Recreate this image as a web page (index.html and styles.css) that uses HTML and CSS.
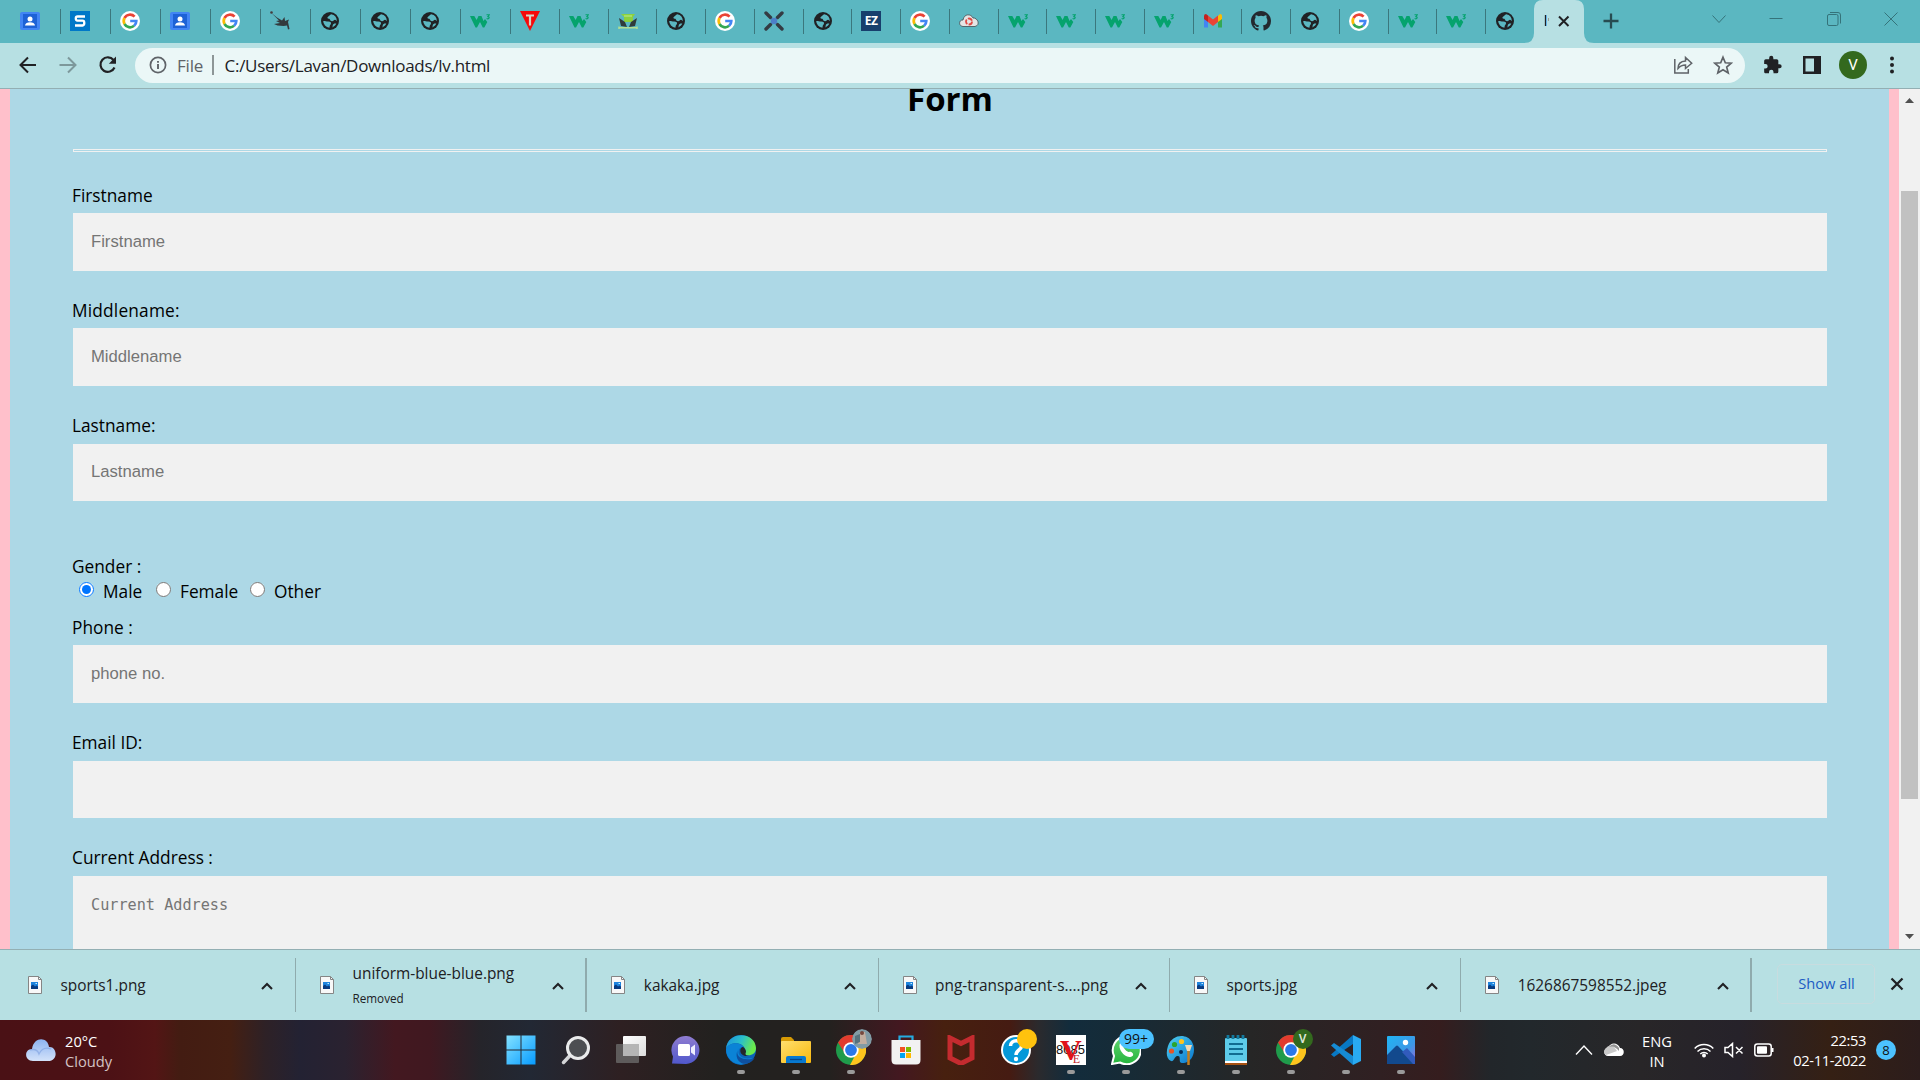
FILE: index.html
```html
<!DOCTYPE html>
<html lang="en">
<head>
<meta charset="utf-8">
<title>Form</title>
<link rel="stylesheet" href="styles.css">
</head>
<body>
<svg class="defs" aria-hidden="true">
  <defs>
    <linearGradient id="g-edge" x1="0" y1="0" x2="1" y2="0.3"><stop offset="0" stop-color="#1a8fe0"/><stop offset=".55" stop-color="#2bc0c8"/><stop offset="1" stop-color="#6bea4c"/></linearGradient>
    <linearGradient id="g-chat" x1="0" y1="0" x2="0" y2="1"><stop offset="0" stop-color="#8f7cd0"/><stop offset="1" stop-color="#5058cc"/></linearGradient>
    <linearGradient id="g-win" x1="0" y1="0" x2="1" y2="1"><stop offset="0" stop-color="#84e2ff"/><stop offset="1" stop-color="#069bff"/></linearGradient>
    <linearGradient id="g-fold" x1="0" y1="0" x2="1" y2="1"><stop offset="0" stop-color="#ffdf6e"/><stop offset="1" stop-color="#f9b90d"/></linearGradient>
    <linearGradient id="g-cloud" x1="0" y1="0" x2="0" y2="1"><stop offset="0" stop-color="#8db3f0"/><stop offset="1" stop-color="#d3e2fa"/></linearGradient>
    <linearGradient id="g-paint" x1="0" y1="0" x2="1" y2="1"><stop offset="0" stop-color="#4fd0f0"/><stop offset="1" stop-color="#0a78cf"/></linearGradient>
    <linearGradient id="g-photo" x1="0" y1="0" x2="1" y2="1"><stop offset="0" stop-color="#20b4f4"/><stop offset=".6" stop-color="#3c98e6"/><stop offset="1" stop-color="#9a68d8"/></linearGradient>
    <linearGradient id="g-wa" x1="0" y1="0" x2="0" y2="1"><stop offset="0" stop-color="#62d571"/><stop offset="1" stop-color="#25b43c"/></linearGradient>
    <linearGradient id="g-view" x1="0" y1="0" x2="1" y2="1"><stop offset="0" stop-color="#fff"/><stop offset="1" stop-color="#dcdcdc"/></linearGradient>
  </defs>
  <symbol id="contact" viewBox="0 0 20 20"><rect y="1" width="20" height="18" rx="2" fill="#4285f4"/><rect x="3" y="3" width="14" height="14" fill="#1e62d6"/><circle cx="10" cy="8" r="2.500" fill="#fff"/><path d="M5 14.500c0-4.500 10-4.500 10 0z" fill="#fff"/></symbol>
  <symbol id="s-logo" viewBox="0 0 20 20"><rect width="20" height="20" fill="#0078c8"/><path d="M15 5.500H7.500Q5.800 5.500 5.800 7.500T7.500 9.700H12.500Q14.300 9.700 14.300 12T12.500 14.500H5" fill="none" stroke="#fff" stroke-width="2.300"/></symbol>
  <symbol id="google" viewBox="0 0 20 20"><circle cx="10" cy="10" r="10" fill="#fff"/><g fill="none" stroke-width="2.700"><path d="M14.600 5.600A6.300 6.300 0 0 0 4.500 7" stroke="#ea4335"/><path d="M4.500 7a6.300 6.300 0 0 0 0 6" stroke="#fbbc05"/><path d="M4.500 13a6.300 6.300 0 0 0 9.600 1.800" stroke="#34a853"/><path d="M14.100 14.800A6.300 6.300 0 0 0 16.300 10H10.200" stroke="#4285f4"/></g></symbol>
  <symbol id="bird" viewBox="0 0 20 20"><path d="M1.500 2l5.500 4.500 5 3L14.500 6l.5 4L19 8.500 18 11l1.500 7-1.500.500-1-4-3.500.500-6-.500-3.500-1.500 6-1-4-2 3-.500z" fill="#333a3d"/><circle cx="1.500" cy="1.500" r="1.300" fill="#463c3d"/></symbol>
  <symbol id="globe" viewBox="0 0 20 20"><circle cx="10" cy="10" r="9" fill="#202124"/><path d="M11.200 3.200C9.800 3.600 9.600 4.800 8.200 5.400 6.800 6 7.400 7.800 8.800 7.800 10.600 7.800 9.600 10.200 12 10.200 13.800 10.200 13.600 8.800 15 8.800 16 8.800 16 9.800 16.800 10A6.900 6.900 0 0 0 11.200 3.200zM3.200 10C5 9.800 6 10.600 8.200 10.600 10.400 10.600 11.800 11.600 10.800 13.200 9.600 14 9.800 15 9.400 16.800A6.900 6.900 0 0 1 3.200 10zM12.400 16.400C14.200 15.600 15.600 14.200 16.300 12.600 14.500 12.200 13 13 12.800 14z" fill="#5bb7c1"/></symbol>
  <symbol id="w3" viewBox="0 0 20 20"><path d="M0 5h4.300l2.300 4L8.500 5h3l2 5 1.500-2 2.300 3-3 5.500h-1.500L10 11l-3 5.500H5.500z" fill="#05a36d"/><path d="M16.500 3.800h2.700l-1.300 1.800c2.200.200 1.400 3-1.300 2" fill="none" stroke="#05a36d" stroke-width="1.100"/></symbol>
  <symbol id="t-logo" viewBox="0 0 20 20"><path d="M0 0h20L10 20z" fill="#f60a0a"/><path d="M6 4.500h8M10 4.500v10" stroke="#d5d5c7" stroke-width="2.200"/></symbol>
  <symbol id="plant" viewBox="0 0 20 20"><path d="M3 3h14l-2 3v5H6V6z" fill="#8bd13e"/><path d="M6 5h8" stroke="#bde993"/><path d="M1 7l6 4 2 5-6-1zM19 7l-6 4-2 5 6-1z" fill="#303b3a"/><path d="M1 15.500v2.500M19 15.500v2.500M1 16.800h18" stroke="#b3df91" stroke-width="1.500"/></symbol>
  <symbol id="x-logo" viewBox="0 0 20 20"><path d="M2 2l4.500 4.500M18 2l-4.500 4.500M2 18l4.500-4.500M18 18l-4.500-4.500" stroke="#343b43" stroke-width="3.400" stroke-linecap="round"/><circle cx="10" cy="10" r="3.200" fill="#4c7fc9"/></symbol>
  <symbol id="cloudy-red" viewBox="0 0 20 20"><path d="M4 15.500c-5-.500-4-7 0-6.500 1-6.500 8-6.500 10-2 4.500-.500 8 7 2 8.500z" fill="#e5e5e5" stroke="#414b50" stroke-width=".8"/><circle cx="10" cy="10.500" r="3" fill="none" stroke="#e04a45" stroke-width="1.800" stroke-dasharray="5 1.300"/></symbol>
  <symbol id="gmail" viewBox="0 0 20 20"><path d="M1 7v9.500h4V9z" fill="#4285f4"/><path d="M15 9v7.500h4V6z" fill="#34a853"/><path d="M15 5l2-2q2 0 2 2v3l-4 3z" fill="#fbbc04"/><path d="M5 4.500l5 4 5-4V11l-5 4-5-4z" fill="#ea4335"/><path d="M1 5q0-2 2-2l2 1.500V11L1 8z" fill="#c5221f"/></symbol>
  <symbol id="github" viewBox="0 0 16 16"><path fill="#24292f" d="M8 0C3.580 0 0 3.580 0 8c0 3.540 2.290 6.530 5.470 7.590.4.070.55-.17.55-.38v-1.490c-2.230.48-2.700-.94-2.700-.94-.36-.92-.89-1.170-.89-1.170-.73-.5.060-.49.060-.49.810.06 1.230.83 1.230.83.710 1.230 1.870.87 2.330.66.070-.52.280-.87.500-1.070-1.780-.2-3.640-.89-3.640-3.950 0-.87.310-1.590.82-2.150-.08-.2-.36-1.020.08-2.120 0 0 .67-.21 2.200.82a7.600 7.600 0 0 1 4 0c1.530-1.040 2.200-.82 2.200-.82.440 1.100.16 1.920.08 2.120.51.560.82 1.270.82 2.150 0 3.070-1.870 3.750-3.650 3.950.29.250.54.730.54 1.480v2.200c0 .21.150.46.550.38A8 8 0 0 0 16 8c0-4.420-3.580-8-8-8z"/></symbol>
  <symbol id="file" viewBox="0 0 14 18"><path d="M.5.500h10l3 3v14H.5z" fill="#f8f8f8" stroke="#858585"/><path d="M10.500.500v3h3" fill="none" stroke="#858585"/><rect x="3" y="6" width="7" height="7" fill="#1e84dd"/><path d="M3 10l2-1.500 2 2 1.500-1 1.500 1V13H3z" fill="#093b80"/><path d="M7.500 7.500h1.500" stroke="#c5edff"/></symbol>
  <symbol id="up" viewBox="0 0 14 10"><path d="M2 8l5-5 5 5" fill="none" stroke="#202124" stroke-width="2.100"/></symbol>
  <symbol id="chrome" viewBox="0 0 30 30"><circle cx="15" cy="15" r="15" fill="#1f9b4b"/><path d="M2 7.500A15 15 0 0 1 28 7.500L15 8 8 17z" fill="#e33b2e"/><path d="M28 7.500A15 15 0 0 1 14 30L22 15 15 7.500z" fill="#fdc41d"/><circle cx="15" cy="15" r="7.700" fill="#fff"/><circle cx="15" cy="15" r="5.900" fill="#2a78e8"/></symbol>
</svg>

<div class="tabstrip">
  <div class="tab wide first"><svg><use href="#contact"/></svg></div>
  <div class="tab wide"><svg><use href="#s-logo"/></svg></div>
  <div class="tab wide"><svg><use href="#google"/></svg></div>
  <div class="tab wide"><svg><use href="#contact"/></svg></div>
  <div class="tab wide"><svg><use href="#google"/></svg></div>
  <div class="tab wide"><svg><use href="#bird"/></svg></div>
  <div class="tab wide"><svg><use href="#globe"/></svg></div>
  <div class="tab wide"><svg><use href="#globe"/></svg></div>
  <div class="tab wide"><svg><use href="#globe"/></svg></div>
  <div class="tab wide"><svg><use href="#w3"/></svg></div>
  <div class="tab"><svg><use href="#t-logo"/></svg></div>
  <div class="tab"><svg><use href="#w3"/></svg></div>
  <div class="tab"><svg><use href="#plant"/></svg></div>
  <div class="tab"><svg><use href="#globe"/></svg></div>
  <div class="tab"><svg><use href="#google"/></svg></div>
  <div class="tab"><svg><use href="#x-logo"/></svg></div>
  <div class="tab"><svg><use href="#globe"/></svg></div>
  <div class="tab"><span class="ez">EZ</span></div>
  <div class="tab"><svg><use href="#google"/></svg></div>
  <div class="tab"><svg><use href="#cloudy-red"/></svg></div>
  <div class="tab"><svg><use href="#w3"/></svg></div>
  <div class="tab"><svg><use href="#w3"/></svg></div>
  <div class="tab"><svg><use href="#w3"/></svg></div>
  <div class="tab"><svg><use href="#w3"/></svg></div>
  <div class="tab"><svg><use href="#gmail"/></svg></div>
  <div class="tab"><svg><use href="#github"/></svg></div>
  <div class="tab"><svg><use href="#globe"/></svg></div>
  <div class="tab"><svg><use href="#google"/></svg></div>
  <div class="tab"><svg><use href="#w3"/></svg></div>
  <div class="tab"><svg><use href="#w3"/></svg></div>
  <div class="tab last"><svg><use href="#globe"/></svg></div>
  <div class="tab-active">
    <svg viewBox="0 0 70 43"><path d="M0 43q10 0 10-10V9q0-9 9-9h32q9 0 9 9v24q0 10 10 10z" fill="#b7e0e3"/><path d="M21.500 15v11" stroke="#202124" stroke-width="1.300"/><path d="M22.500 15v11" stroke="#63b2e8"/><path d="M24.500 18v3" stroke="#9a9f9a"/><path d="M35 16.500l9.500 9.500m0-9.500l-9.500 9.500" stroke="#202124" stroke-width="2"/></svg>
  </div>
  <svg class="newtab" viewBox="0 0 16 16"><path d="M8 .5v15M.5 8h15" stroke="#274b51" stroke-width="2.300"/></svg>
  <div class="winctl">
    <svg viewBox="0 0 14 14"><path d="M.5 3.500l6.500 7 6.500-7"/></svg>
    <svg viewBox="0 0 14 14"><path d="M.5 6.500h13"/></svg>
    <svg viewBox="0 0 14 14"><rect x=".5" y="2.500" width="10.500" height="11" rx="1.500"/><path d="M3 .5h8q2.500 0 2.500 2.500v8.500"/></svg>
    <svg viewBox="0 0 14 14"><path d="M.5.500l13 13m0-13l-13 13"/></svg>
  </div>
</div>

<div class="toolbar">
  <svg class="nav" viewBox="0 0 20 20"><path d="M18 10H3M10 2.500L2.500 10l7.500 7.500" stroke="#202124"/></svg>
  <svg class="nav" viewBox="0 0 20 20"><path d="M1.500 10H17M10 2.500l7.500 7.500-7.500 7.500" stroke="#7d989b"/></svg>
  <svg class="nav" viewBox="0 0 20 20"><path d="M15.500 5A7.300 7.300 0 1 0 16.500 12.500" stroke="#202124" stroke-width="2.200"/><path d="M18 1.500v7.200h-7.200z" fill="#202124" stroke="none"/></svg>
  <div class="omnibox">
    <svg class="info" viewBox="0 0 18 18"><circle cx="9" cy="9" r="7.600" fill="none" stroke="#5f6368" stroke-width="1.700"/><path d="M9 8v5M9 5v1.800" stroke="#5f6368" stroke-width="1.900"/></svg>
    <span class="scheme">File</span>
    <span class="sep"></span>
    <span class="url">C:/Users/Lavan/Downloads/lv.html</span>
    <svg class="share" viewBox="0 0 20 20"><g fill="none" stroke="#5f6368" stroke-width="1.500"><path d="M1.800 4v14h13.500v-4"/><path d="M5 13.500q0-7 7.500-7.500V2.500l6.200 5.800-6.200 5.200V10Q8 10 5 13.500z"/></g></svg>
    <svg class="star" viewBox="0 0 20 20"><path d="M10 2.200l2.300 5.600 6 .4-4.600 3.900 1.500 5.900-5.200-3.200L4.800 18l1.500-5.900L1.700 8.200l6-.4z" fill="none" stroke="#5f6368" stroke-width="1.700"/></svg>
  </div>
  <svg class="ext" viewBox="0 0 24 24"><path fill="#202124" d="M20.500 11H19V7a2 2 0 0 0-2-2h-4V3.500a2.500 2.500 0 0 0-5 0V5H4a2 2 0 0 0-2 2v3.800h1.500a2.700 2.700 0 0 1 0 5.400H2V20c0 1.100.9 2 2 2h3.800v-1.500a2.700 2.700 0 0 1 5.400 0V22H17a2 2 0 0 0 2-2v-4h1.500a2.500 2.500 0 0 0 0-5z"/></svg>
  <svg class="panel" viewBox="0 0 18 18"><rect x="1.250" y="1.250" width="15.500" height="15.500" fill="none" stroke="#202124" stroke-width="2.500"/><path d="M11 1h6v16h-6z" fill="#202124"/></svg>
  <span class="avatar">V</span>
  <svg class="dots" viewBox="0 0 6 18"><g fill="#202124"><circle cx="3" cy="2.500" r="2"/><circle cx="3" cy="9" r="2"/><circle cx="3" cy="15.500" r="2"/></g></svg>
</div>

<div class="viewport">
  <form class="page">
    <h1>Form</h1>
    <hr>
    <label class="l1">Firstname</label>
    <input class="field" type="text" placeholder="Firstname">
    <label class="wider">Middlename:</label>
    <input class="field" type="text" placeholder="Middlename">
    <label class="l3">Lastname:</label>
    <input class="field short" type="text" placeholder="Lastname">
    <label class="gender">Gender :</label>
    <div class="radios">
      <input type="radio" name="g" checked><span class="male">Male</span>
      <input type="radio" name="g"><span class="female">Female</span>
      <input type="radio" name="g"><span>Other</span>
    </div>
    <label class="phone">Phone :</label>
    <input class="field" type="text" placeholder="phone no.">
    <label class="l3">Email ID:</label>
    <input class="field short" type="text">
    <label class="l3">Current Address :</label>
    <textarea class="field" placeholder="Current Address"></textarea>
  </form>
  <div class="scrollbar">
    <svg viewBox="0 0 9 5"><path d="M0 5l4.500-5L9 5z" fill="#505050"/></svg>
    <div class="thumb"></div>
    <svg class="down" viewBox="0 0 9 5"><path d="M0 0l4.500 5L9 0z" fill="#505050"/></svg>
  </div>
</div>

<div class="downloads">
  <div class="item"><svg class="ficon"><use href="#file"/></svg><div class="fname">sports1.png</div><svg class="up"><use href="#up"/></svg></div>
  <div class="item thick"><svg class="ficon"><use href="#file"/></svg><div class="fname two">uniform-blue-blue.png<small>Removed</small></div><svg class="up"><use href="#up"/></svg></div>
  <div class="item"><svg class="ficon"><use href="#file"/></svg><div class="fname">kakaka.jpg</div><svg class="up"><use href="#up"/></svg></div>
  <div class="item"><svg class="ficon"><use href="#file"/></svg><div class="fname">png-transparent-s....png</div><svg class="up"><use href="#up"/></svg></div>
  <div class="item"><svg class="ficon"><use href="#file"/></svg><div class="fname">sports.jpg</div><svg class="up"><use href="#up"/></svg></div>
  <div class="item thick"><svg class="ficon"><use href="#file"/></svg><div class="fname">1626867598552.jpeg</div><svg class="up"><use href="#up"/></svg></div>
  <div class="showall">Show all</div>
  <svg class="dclose" viewBox="0 0 14 14"><path d="M1.500 1.500l11 11m0-11l-11 11" stroke="#202124" stroke-width="2.300"/></svg>
</div>

<div class="taskbar">
  <svg class="weather" viewBox="0 0 30 22"><path d="M7 22C-2 22-2 10 6 10 8-3 22-2 23 8c8-1 10 14-1 14z" fill="url(#g-cloud)"/><path d="M4 11q7-2 9 4 4-8 12-5" fill="none" stroke="#7b9fe0" stroke-width="1.300" opacity=".6"/></svg>
  <div class="wtext"><span>20°C</span><span class="dim">Cloudy</span></div>
  <div class="apps">
    <div class="app"><svg viewBox="0 0 30 30"><path d="M.5.500H14.500V14.500H.5zM15.500.500H29.500V14.500H15.500zM.5 15.500H14.500V29.500H.5zM15.500 15.500H29.500V29.500H15.500z" fill="url(#g-win)"/></svg></div>
    <div class="app"><svg viewBox="0 0 30 30"><path d="M9.500 20l-7 7.500" stroke="#d4d5d7" stroke-width="3.500" stroke-linecap="round"/><circle cx="17" cy="13" r="10.500" fill="#4c4e52" stroke="#eaebec" stroke-width="3"/></svg></div>
    <div class="app"><svg viewBox="0 0 30 30"><rect x="7" y="1" width="23" height="20" rx="1" fill="url(#g-view)"/><rect y="9" width="23" height="19" rx="1" fill="#6f6f6f" opacity=".75"/><path d="M7 9h16v12H7z" fill="#b5b5b5"/></svg></div>
    <div class="app"><svg viewBox="0 0 30 30"><path d="M1 28.500l1-7A14 14 0 1 1 15 29z" fill="url(#g-chat)"/><rect x="7" y="9" width="12" height="12" rx="1.500" fill="#fff"/><path d="M20 12.500l4-3v11l-4-3z" fill="#eef"/></svg></div>
    <div class="app on"><svg viewBox="0 0 30 30"><circle cx="15" cy="15" r="15" fill="#0c63b8"/><path d="M0 14C1-4 29-4 30 13c0 6-5 8-10 7-2-1 0-3-1-6C16 6 3 7 0 14z" fill="url(#g-edge)"/><path d="M0 14c2-7 16-7 17-2-7 0-7 14 9 11-7 12-26 6-26-9z" fill="#0b83d6"/><path d="M14 12c-6 6-2 14 12 12 2-1 3-1 2 0C18 36 4 23 14 12z" fill="#0e50a0"/><path d="M17 12c-3 0-5 7 2 9l7 0c-4 0-8 0-6-4 0-2-1-4-3-5z" fill="#24262a"/></svg></div>
    <div class="app on"><svg viewBox="0 0 30 30"><path d="M0 4q0-2 2-2h8l3 3v4H0z" fill="#d69a04"/><rect y="6" width="30" height="22" rx="1" fill="url(#g-fold)"/><path d="M5 28v-5q0-2 2-2h16q2 0 2 2v5z" fill="#0879d0"/><path d="M9 24.500h12" stroke="#06468a" stroke-width="1.300"/></svg></div>
    <div class="app on"><svg viewBox="0 0 30 30"><use href="#chrome"/></svg><svg class="badge photo" viewBox="0 0 20 20"><circle cx="10" cy="10" r="10" fill="#819ba5"/><path d="M8 3h5l2 12H6z" fill="#c2ae9f"/><path d="M3 7l5-2v8l-5 2z" fill="#56717c"/><circle cx="10" cy="4" r="2" fill="#75483e"/></svg></div>
    <div class="app"><svg viewBox="0 0 30 30"><path d="M8.500 7V1.500h13V7" fill="none" stroke="#25abe0" stroke-width="2.200"/><path d="M.5 5h29v20q0 4.500-4.500 4.500H5Q.5 29.500.5 25z" fill="#f2f2f2"/><path d="M9 12h5v5H9z" fill="#f25022"/><path d="M15 12h5v5h-5z" fill="#7fba00"/><path d="M9 18h5v5H9z" fill="#00a4ef"/><path d="M15 18h5v5h-5z" fill="#ffb900"/></svg></div>
    <div class="app"><svg viewBox="0 0 30 30"><path d="M4 3l11 5.500L26 3v20l-11 5.500L4 23z" fill="none" stroke="#c42b2f" stroke-width="5"/></svg></div>
    <div class="app"><svg viewBox="0 0 30 30"><circle cx="15" cy="15" r="14" fill="#0598d9" stroke="#fff" stroke-width="2"/><path d="M9.500 11c0-7 11.500-7 11 0 0 4-5.500 4-5.500 9" fill="none" stroke="#fff" stroke-width="3.500"/><circle cx="15" cy="24" r="2.200" fill="#fff"/></svg><span class="badge yellow"></span></div>
    <div class="app on"><span class="ve"><b>8085</b><i>V</i><em>E</em></span></div>
    <div class="app on"><svg viewBox="0 0 30 30"><path d="M1 29l2-8A14 14 0 1 1 9 27.500z" fill="url(#g-wa)" stroke="#fff" stroke-width="2"/><path d="M9 8c2-2 4 2 3.500 3.500-.5 1.500 4 6 5.500 5.500 2-1 5 1.500 4 3.500C16 26 6 15 9 8z" fill="#fff"/></svg><span class="badge count">99+</span></div>
    <div class="app on"><svg viewBox="0 0 30 30"><path d="M2 11C6-1 21-2 26 7c5 9 0 20-8 21-8 1-1-8-7-7-3 1-3 6-6 5-5-2-5-9-3-15z" fill="url(#g-paint)"/><circle cx="15.500" cy="6.500" r="2.600" fill="#ffc31e"/><circle cx="8.500" cy="9.500" r="2.600" fill="#2ba52d"/><circle cx="5.500" cy="16" r="2.600" fill="#e75524"/><circle cx="15" cy="17" r="2" fill="#062f5c"/><path d="M22.500 15v15" stroke="#c27d1e" stroke-width="2.500"/><path d="M19 10h7l-2 6h-3z" fill="#f2d8b2"/></svg></div>
    <div class="app on"><svg viewBox="0 0 30 30"><rect x="4" y="3" width="22" height="26" rx="1" fill="#5dcbe9"/><path d="M4 26h22v2H4z" fill="#fff"/><path d="M4 28h22v2H4z" fill="#a65111"/><path d="M8 9h14M8 14h14M8 19h14" stroke="#116c91" stroke-width="2"/><path d="M7 0v4M12 0v4M17 0v4M22 0v4" stroke="#137a9f" stroke-width="2.800"/></svg></div>
    <div class="app on"><svg viewBox="0 0 30 30"><use href="#chrome"/></svg><span class="badge vb">V</span></div>
    <div class="app on"><svg viewBox="0 0 30 30"><path d="M22 0v9L3 22l-3-2.500z" fill="#0878c4"/><path d="M22 30v-9L3 8l-3 2.500z" fill="#168bd4"/><path d="M22 0l8 4v22l-8 4z" fill="#29aaf2"/></svg></div>
    <div class="app on"><svg viewBox="0 0 30 30"><rect x="1" y="1" width="28" height="28" rx="1" fill="url(#g-photo)"/><path d="M1 20l9-9q1-1 2 0l17 18H1z" fill="#12498d"/><path d="M16 17l5-4 8 9v7h-2z" fill="#315bbc"/><circle cx="19.500" cy="7.500" r="2.700" fill="#fff"/></svg></div>
  </div>
  <div class="tray">
    <svg class="tup" viewBox="0 0 18 12"><path d="M1 10.500L9 2l8 8.500" fill="none" stroke="#fff" stroke-width="1.400"/></svg>
    <svg class="tcloud" viewBox="0 0 20 14"><path d="M4 13C-1 13-1 5 4 5c2-6 10-6 12 0 5 0 5 8 0 8z" fill="#fff"/><path d="M1 6q6-8 12 2L2 12q-3-2-1-6z" fill="#c9c9c9"/><path d="M5 4q5-6 10 1v3Q10 2 5 4z" fill="#929292"/></svg>
    <div class="lang"><span>ENG</span><span>IN</span></div>
    <svg class="wifi" viewBox="0 0 20 16"><g fill="none" stroke="#fff" stroke-width="1.500"><path d="M.7 6.500a13 13 0 0 1 18.600 0M3.500 9.500a9.200 9.200 0 0 1 13 0M6.300 12a5.300 5.300 0 0 1 7.400 0"/></g><circle cx="10" cy="13.500" r="2" fill="#fff"/></svg>
    <svg class="vol" viewBox="0 0 20 16"><path d="M1 5.500h3L8.500 1.500v13L4 10.500H1zM12 5l6.500 6.500M18.500 5L12 11.500" fill="none" stroke="#fff" stroke-width="1.500"/></svg>
    <svg class="bat" viewBox="0 0 20 14"><rect x=".8" y="1" width="16.400" height="12" rx="2.500" fill="none" stroke="#fff" stroke-width="1.500"/><rect x="3" y="3.200" width="10" height="7.600" rx="1" fill="#fff"/><path d="M18.500 5v4" stroke="#fff" stroke-width="2"/></svg>
    <div class="clock"><span>22:53</span><span>02-11-2022</span></div>
    <span class="notif">8</span>
  </div>
</div>
</body>
</html>
```
FILE: styles.css
```css
* { box-sizing: border-box; }
body {
  margin: 0; width: 1920px; height: 1080px; overflow: hidden;
  display: flex; flex-direction: column;
  font-family: "Open Sans", "Noto Sans", sans-serif; color: #000;
}
svg { display: block; flex: none; }
.defs { position: absolute; width: 0; height: 0; }

/* tab strip */
.tabstrip { height: 43px; background: #5bb7c1; display: flex; flex: none; }
.tab {
  width: 48.75px; height: 25px; margin-top: 9px; padding: 2px 0 0 9px; flex: none;
  border-right: 1px solid #3b777d;
}
.tab.wide { width: 50px; }
.tab.first { width: 61px; padding-left: 20px; }
.tab.last { width: 48px; border-right: 0; }
.tab svg { width: 20px; height: 20px; }
.ez {
  display: block; width: 20px; height: 20px; background: #173f6d; color: #fff;
  font: bold 12px/20px "Open Sans", sans-serif; text-align: center; letter-spacing: -.3px;
}
.tab-active { width: 70px; margin-left: -10px; flex: none; }
.tab-active svg { width: 70px; height: 43px; }
.newtab { width: 16px; height: 16px; margin: 13px 0 0 9px; }
.winctl { display: flex; gap: 43.300px; margin: 12px 22px 0 auto; }
.winctl svg { width: 14px; height: 14px; fill: none; stroke: #35737a; stroke-width: 1; }

/* toolbar */
.toolbar {
  height: 46px; background: #b7e0e3; border-bottom: 1px solid #93afb3; flex: none;
  display: flex; align-items: center; padding-left: 18px;
}
.nav { width: 20px; height: 20px; margin: 0 20px 2px 0; fill: none; stroke-width: 2; }
.omnibox {
  width: 1610px; height: 35px; margin: 0 0 1px -3px; border-radius: 18px; background: #ebf7f7; flex: none;
  display: flex; align-items: center; padding-left: 14px; font-size: 17px;
}
.info { width: 18px; height: 18px; }
.scheme { width: 35px; margin-left: 10px; color: #5f6368; letter-spacing: -.2px; }
.sep { width: 2px; height: 20px; background: #8d9697; }
.url { margin-left: 10.500px; color: #202124; letter-spacing: -.27px; }
.share { width: 20px; height: 20px; margin-left: auto; }
.star { width: 20px; height: 20px; margin: 0 12px 0 20px; }
.ext { width: 21px; height: 20px; margin: 0 20px 2px 17px; }
.panel { width: 18px; height: 18px; margin-bottom: 2px; }
.avatar {
  width: 28px; height: 28px; margin: 0 22px 2px 18px; border-radius: 50%; background: #33691e;
  color: #fff; font: 15px/28px Roboto, sans-serif; text-align: center; flex: none;
}
.dots { width: 6px; height: 18px; margin-bottom: 2px; }

/* page */
.viewport { height: 860px; flex: none; display: flex; overflow: hidden; }
.page {
  width: 1899px; padding: 0 62px 0 63px; background: #add8e6; overflow: hidden;
  border: solid pink; border-width: 0 10px; display: flex; flex-direction: column;
  font-size: 17.300px;
}
h1 { margin: 0; height: 60px; flex: none; text-align: center; font-size: 33px; line-height: 19px; }
hr { width: 100%; height: 3px; margin: 0; border: 1px solid #f1f1f1; flex: none; }
label {
  height: 57px; flex: none; display: flex; align-items: flex-end;
  padding-bottom: 5px; line-height: 24px; text-indent: -1px;
}
.wider { letter-spacing: .2px; }
.l1 { height: 61px; }
.l3 { height: 58px; padding-bottom: 6px; }
.field {
  height: 58px; flex: none; width: 100%; margin: 0; padding: 0 18px; border: 0; outline: 0; border-radius: 0;
  background: #f1f1f1; font: 16.670px "Liberation Sans", Arial, sans-serif;
}
.field::placeholder { color: #757575; opacity: 1; }
.field.short { height: 57px; padding-bottom: 1px; }
textarea.field { height: 90px; padding: 19px 18px; resize: none; font: 15.200px/21px "DejaVu Sans Mono", monospace; }
.gender { height: 79px; padding: 0 0 1px; line-height: 25px; }
.radios { height: 25px; flex: none; display: flex; line-height: 23px; padding-left: 6px; }
.radios input { width: 15px; height: 15px; margin: 2px 9px 0 0; flex: none; }
.male { width: 53px; }
.female { width: 70px; }
.phone { height: 40px; }

/* scrollbar */
.scrollbar { width: 21px; background: #f1f1f1; display: flex; flex-direction: column; align-items: center; padding: 9px 0 10px; }
.scrollbar svg { width: 9px; height: 5px; }
.thumb { width: 17px; height: 608px; margin-top: 88px; background: #c1c1c1; }
.scrollbar .down { margin-top: auto; }

/* downloads */
.downloads {
  height: 71px; flex: none; background: #b7e0e3; border-top: 1px solid #93afb3;
  display: flex; align-items: center; color: #202124;
}
.item {
  width: 291.300px; height: 54px; padding: 0 21px 0 24px; flex: none;
  border-right: 1px solid #8fabad; display: flex; align-items: center;
}
.item:first-child { width: 296px; padding-left: 28px; }
.item.thick { border-right: 2px solid #8fabad; padding-right: 20px; }
.ficon { width: 14px; height: 18px; margin-right: 18.500px; }
.fname { font-size: 15.400px; line-height: 20px; padding-top: 2px; }
.fname.two { line-height: 22px; padding-top: 3px; }
.fname small { display: block; font-size: 11.700px; line-height: 26px; }
.up { width: 14px; height: 10px; margin: 2px 0 0 auto; }
.showall {
  width: 98px; height: 40px; margin-left: 25px; margin-bottom: 2px; border: 1px solid #c8dcdf; border-radius: 5px;
  color: #1c5cc4; font-size: 14.700px; font-weight: 500; line-height: 37px; text-align: center;
}
.dclose { width: 14px; height: 14px; margin-left: 15px; margin-bottom: 2px; }

/* taskbar */
.taskbar {
  height: 60px; flex: none; display: flex; align-items: center; color: #fff; font-size: 14.700px; line-height: 20px;
  background: linear-gradient(90deg, #4a1115 0, #4c1115 110px, #531515 155px, #431c12 180px, #451f12 230px, #2e2126 265px,
    #232233 300px, #2a2230 345px, #431820 395px, #401820 430px, #25242a 480px, #222834 530px, #2e2022 620px,
    #22211f 720px, #24211f 830px, #431820 900px, #47200f 945px, #451b12 1010px, #2b2a2d 1038px, #122c3c 1070px,
    #172b36 1130px, #262626 1250px, #302022 1380px, #351d1e 1440px, #22262a 1490px, #22282c 1530px,
    #282628 1640px, #26222a 1740px, #352014 1830px, #2c1d1c 1920px);
}
.weather { width: 30px; height: 22px; margin-left: 26px; }
.wtext { display: flex; flex-direction: column; margin-left: 9px; width: 80px; line-height: 20px; padding-top: 1px; }
.dim { color: #d3c2c3; }
.apps { display: flex; margin-left: 348px; }
.app { width: 55.060px; height: 60px; padding: 15px 0 0 12.500px; position: relative; flex: none; }
.app > svg:first-child { width: 30px; height: 30px; }
.on::after {
  content: ""; position: absolute; left: 23.500px; top: 50px; width: 8px; height: 4px; border-radius: 2px; background: #9a9a9a;
}
.badge { position: absolute; left: 29px; top: 9px; width: 20px; height: 20px; border-radius: 50%; text-align: center; }
.yellow { background: #ffc20e; }
.vb { background: #33691e; color: #dfe8da; font: 500 12px/20px Roboto, sans-serif; }
.count { left: 20px; width: 35px; border-radius: 10px; background: #4cc2ff; color: #111; font-size: 14px; line-height: 20px; }
.ve { display: block; position: relative; width: 30px; height: 30px; background: #fff; overflow: hidden; }
.ve b, .ve i, .ve em { position: absolute; font-style: normal; }
.ve b { left: 0; top: 6px; color: #111; font: 13px/18px "Liberation Sans", sans-serif; }
.ve i { left: 4px; top: 1px; color: #e0131b; font: bold 30px/28px "Liberation Serif", serif; }
.ve em { right: 6px; bottom: 0; color: #c0242a; font: 12px/11px "Liberation Serif", serif; }

.tray { display: flex; align-items: center; margin-left: auto; padding-right: 24px; }
.tup { width: 18px; height: 12px; margin-right: 11px; }
.tcloud { width: 20px; height: 14px; }
.lang { width: 40px; margin: 0 17px 0 13px; padding-top: 1px; display: flex; flex-direction: column; align-items: center; }
.wifi { width: 20px; height: 16px; }
.vol { width: 20px; height: 16px; margin: 0 10px; }
.bat { width: 20px; height: 14px; }
.clock { width: 92px; display: flex; flex-direction: column; align-items: flex-end; letter-spacing: -.4px; }
.notif {
  width: 20px; height: 20px; margin-left: 10px; border-radius: 50%; background: #4cc2ff; color: #111;
  font-size: 13px; line-height: 20px; text-align: center;
}
```
